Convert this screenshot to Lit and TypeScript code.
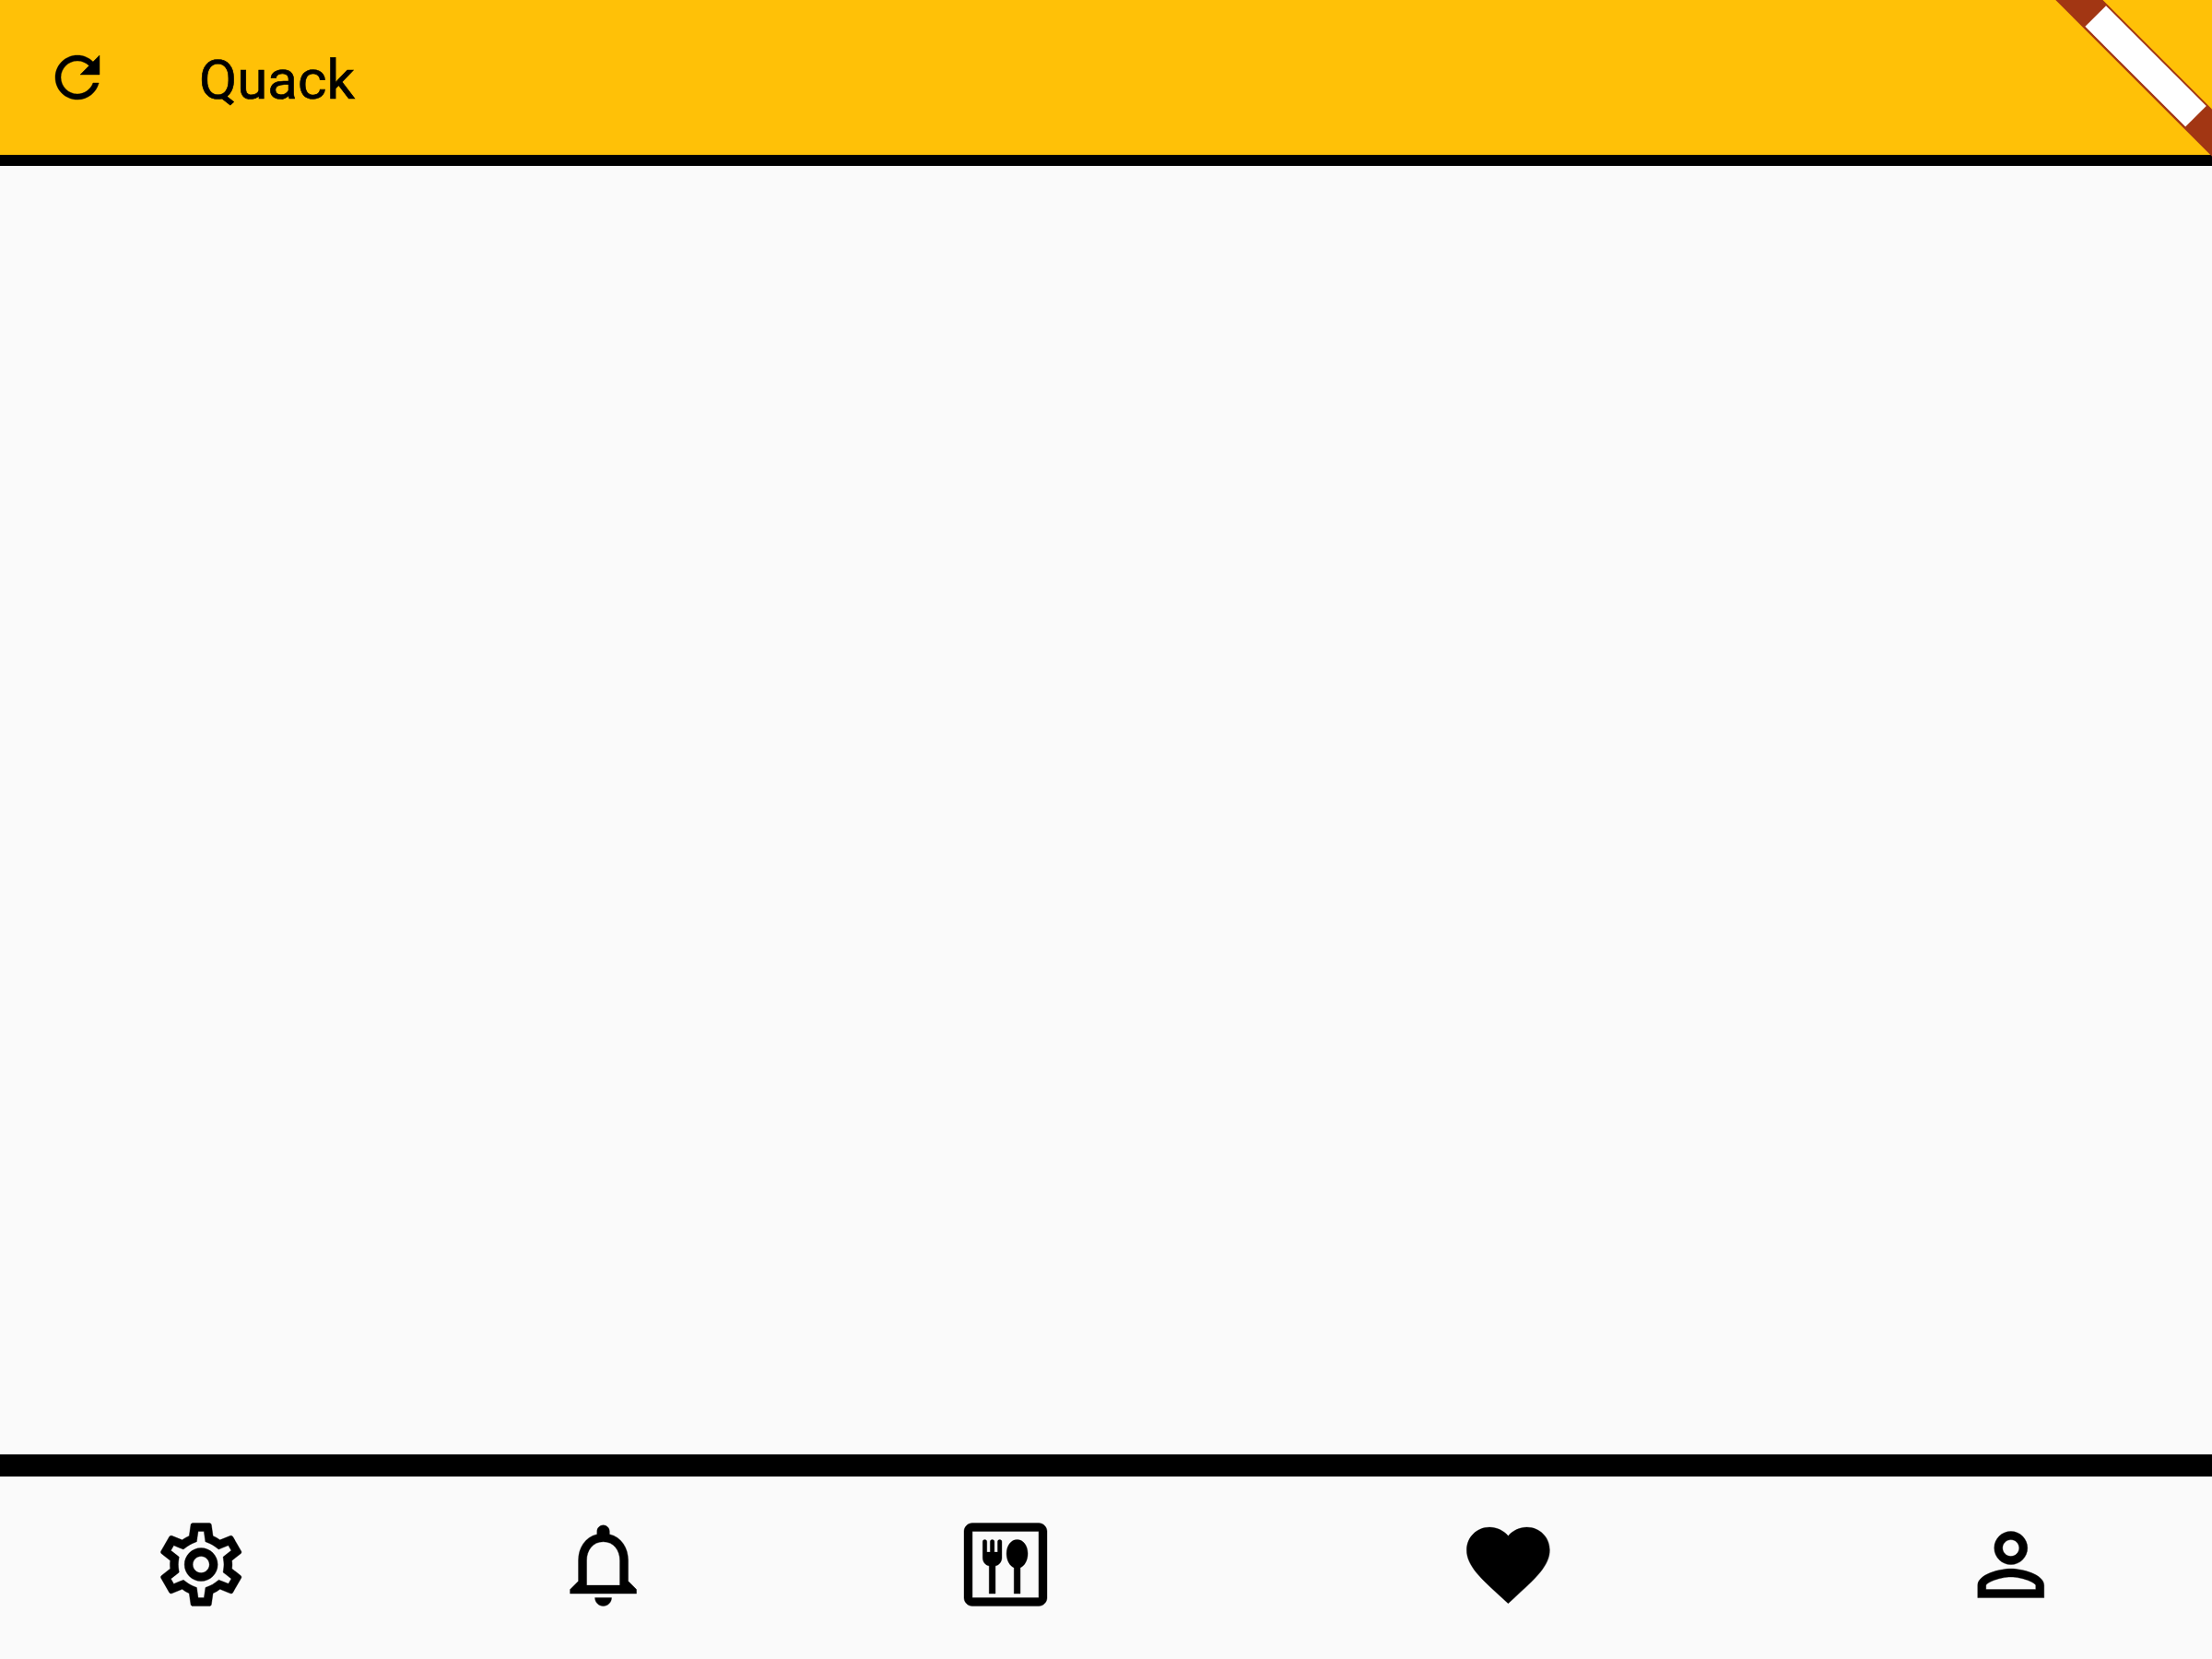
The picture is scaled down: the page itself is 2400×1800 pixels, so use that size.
import { LitElement, html, css, svg } from "lit";
import { customElement } from "lit/decorators.js";

const REFRESH =
  "M17.65 6.35C16.2 4.9 14.21 4 12 4c-4.42 0-7.99 3.58-7.99 8s3.57 8 7.99 8c3.73 0 6.84-2.55 7.73-6h-2.08c-.82 2.33-3.04 4-5.65 4-3.31 0-6-2.69-6-6s2.69-6 6-6c1.66 0 3.14.69 4.22 1.78L13 11h7V4l-2.35 2.35z";

const SETTINGS =
  "M19.43 12.98c.04-.32.07-.64.07-.98 0-.34-.03-.66-.07-.98l2.11-1.65c.19-.15.24-.42.12-.64l-2-3.46c-.09-.16-.26-.25-.44-.25-.06 0-.12.01-.17.03l-2.49 1c-.52-.4-1.08-.73-1.69-.98l-.38-2.65C14.46 2.18 14.25 2 14 2h-4c-.25 0-.46.18-.49.42l-.38 2.65c-.61.25-1.17.59-1.69.98l-2.49-1c-.06-.02-.12-.03-.18-.03-.17 0-.34.09-.43.25l-2 3.46c-.13.22-.07.49.12.64l2.11 1.65c-.04.32-.07.65-.07.98 0 .33.03.66.07.98l-2.11 1.65c-.19.15-.24.42-.12.64l2 3.46c.09.16.26.25.44.25.06 0 .12-.01.17-.03l2.49-1c.52.4 1.08.73 1.69.98l.38 2.65c.03.24.24.42.49.42h4c.25 0 .46-.18.49-.42l.38-2.65c.61-.25 1.17-.59 1.69-.98l2.49 1c.06.02.12.03.18.03.17 0 .34-.09.43-.25l2-3.46c.12-.22.07-.49-.12-.64l-2.11-1.65zm-1.98-1.71c.04.31.05.52.05.73 0 .21-.02.43-.05.73l-.14 1.13.89.7 1.08.84-.7 1.21-1.27-.51-1.04-.42-.9.68c-.43.32-.84.56-1.25.73l-1.06.43-.16 1.13-.2 1.35h-1.4l-.19-1.35-.16-1.13-1.06-.43c-.43-.18-.83-.41-1.23-.71l-.91-.7-1.06.43-1.27.51-.7-1.21 1.08-.84.89-.7-.14-1.13c-.03-.31-.05-.54-.05-.74s.02-.43.05-.73l.14-1.13-.89-.7-1.08-.84.7-1.21 1.27.51 1.04.42.9-.68c.43-.32.84-.56 1.25-.73l1.06-.43.16-1.13.2-1.35h1.39l.19 1.35.16 1.13 1.06.43c.43.18.83.41 1.23.71l.91.7 1.06-.43 1.27-.51.7 1.21-1.07.85-.89.7.14 1.13zM12 8c-2.21 0-4 1.79-4 4s1.79 4 4 4 4-1.79 4-4-1.79-4-4-4zm0 6c-1.1 0-2-.9-2-2s.9-2 2-2 2 .9 2 2-.9 2-2 2z";

const BELL =
  "M12 22c1.1 0 2-.9 2-2h-4c0 1.1.9 2 2 2zm6-6v-5c0-3.07-1.63-5.64-4.5-6.32V4c0-.83-.67-1.5-1.5-1.5s-1.5.67-1.5 1.5v.68C7.64 5.36 6 7.92 6 11v5l-2 2v1h16v-1l-2-2zm-2 1H8v-6c0-2.48 1.51-4.5 4-4.5s4 2.02 4 4.5v6z";

const DINING =
  "M4 2h16c1.1 0 2 .9 2 2v16c0 1.1-.9 2-2 2H4c-1.1 0-2-.9-2-2V4c0-1.1.9-2 2-2zM4 4v16h16V4z" +
  "M14.05 12.73c-1.04-.43-1.8-1.8-1.8-3.38C12.25 7.4 13.35 6 14.8 6s2.55 1.4 2.55 3.35c0 1.58-.76 2.95-1.8 3.38V19h-1.5z" +
  "M8.05 12.32C7.12 12.1 6.5 11.3 6.5 10.35V6.5c0-.3.22-.5.5-.5s.5.2.5.5V9h.8V6.5c0-.3.22-.5.5-.5s.5.2.5.5V9h.8V6.5c0-.3.22-.5.5-.5s.5.2.5.5v3.85c0 .95-.67 1.75-1.55 1.97V19H8.05z";

const HEART =
  "M12 21.35l-1.45-1.32C5.4 15.36 2 12.28 2 8.5 2 5.42 4.42 3 7.5 3c1.74 0 3.41.81 4.5 2.09C13.09 3.81 14.76 3 16.5 3 19.58 3 22 5.42 22 8.5c0 3.78-3.4 6.86-8.55 11.54L12 21.35z";

const PERSON =
  "M12 6c1.1 0 2 .9 2 2s-.9 2-2 2-2-.9-2-2 .9-2 2-2m0 9c2.7 0 5.8 1.29 6 2v1H6v-.99c.2-.72 3.3-2.01 6-2.01m0-11C9.79 4 8 5.79 8 8s1.79 4 4 4 4-1.79 4-4-1.79-4-4-4zm0 9c-2.67 0-8 1.34-8 4v3h16v-3c0-2.66-5.33-4-8-4z";

// The origin nudges a glyph by a fraction of a pixel inside its snapped box.
const icon = (d: string, origin = "0 0") => html`
  <svg class="icon" viewBox="${origin} 24 24" aria-hidden="true">
    ${svg`<path fill-rule="evenodd" d=${d}></path>`}
  </svg>
`;

const NAV = [
  { d: SETTINGS, origin: "-0.04 0.09", wide: false },
  { d: BELL, origin: "0.1 0.09", wide: false },
  { d: DINING, origin: "0 0.09", wide: false },
  { d: HEART, origin: "-0.08 0.09", wide: true },
  { d: PERSON, origin: "0.05 0.09", wide: false },
];

@customElement("app-root")
export class AppRoot extends LitElement {
  static styles = css`
    :host {
      display: flex;
      flex-direction: column;
      position: relative;
      height: 100vh;
      overflow: hidden;
      background: #fafafa;
      color: #000;
      font-family: Roboto, "Liberation Sans", sans-serif;
    }
    .icon {
      display: block;
      fill: currentColor;
      stroke: currentColor;
      stroke-width: 0.08;
    }
    .bar {
      display: flex;
      align-items: center;
      box-sizing: border-box;
      height: 180px;
      border-bottom: 12px solid #000;
      background: #ffc107;
    }
    .leading {
      display: flex;
      justify-content: center;
      width: 168px;
      margin-right: 48px;
    }
    .leading .icon {
      width: 72px;
      height: 72px;
      stroke-width: 0.14;
    }
    .title {
      margin: 0;
      padding-top: 5px;
      font-size: 60px;
      font-weight: 400;
      line-height: 71px;
      -webkit-text-stroke: 0.7px currentColor;
    }
    .content {
      flex: 1;
    }
    .nav {
      display: flex;
      box-sizing: border-box;
      height: 222px;
      padding-top: 42px;
      border-top: 24px solid #000;
    }
    .item {
      display: flex;
      flex: 2 1 0;
      justify-content: center;
    }
    .item.wide {
      flex-grow: 3;
    }
    .item .icon {
      width: 108px;
      height: 108px;
    }
    .ribbon {
      position: absolute;
      top: 0;
      right: 0;
      width: 180px;
      height: 180px;
    }
    .band {
      fill: #a23613;
    }
    .label {
      fill: #fff;
    }
  `;

  render() {
    return html`
      <header class="bar">
        <div class="leading">${icon(REFRESH)}</div>
        <h1 class="title">Quack</h1>
      </header>
      <main class="content"></main>
      <nav class="nav">
        ${NAV.map(
          (n) => html`<div class="item ${n.wide ? "wide" : ""}">${icon(n.d, n.origin)}</div>`
        )}
      </nav>
      <svg class="ribbon" viewBox="0 0 180 180" aria-hidden="true">
        <polygon class="band" points="10.3,0 61.5,0 180,118.5 180,169.7"></polygon>
        <polygon class="label" points="65,6.2 173.8,115 151.2,137.6 42.4,28.8"></polygon>
      </svg>
    `;
  }
}
